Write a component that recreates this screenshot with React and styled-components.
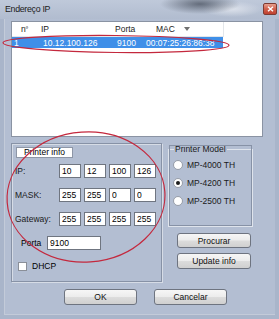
import styled, { createGlobalStyle } from "styled-components";

const GlobalStyle = createGlobalStyle`
  html, body {
    margin: 0;
    padding: 0;
    background: #a9b5ca;
  }
  * {
    box-sizing: border-box;
  }
`;

const columns = [
  { key: "num", width: 25 },
  { key: "ip", width: 74 },
  { key: "port", width: 33 },
  { key: "mac", width: 79 },
];

const printers = [
  { ip: "1", addr: "10.12.100.126", port: "9100", mac: "00:07:25:26:86:38" },
];

const ipRows = [
  { label: "IP:", values: ["10", "12", "100", "126"] },
  { label: "MASK:", values: ["255", "255", "0", "0"] },
  { label: "Gateway:", values: ["255", "255", "255", "255"] },
];

const models = ["MP-4000 TH", "MP-4200 TH", "MP-2500 TH"];

export default function App() {
  return (
    <>
      <GlobalStyle />
      <Window>
        <TitleBar>
          <Title>Endereço IP</Title>
          <CloseButton>
            <svg width="7" height="6" viewBox="0 0 7 6">
              <path d="M1 0.8 L6 5.2 M6 0.8 L1 5.2" stroke="#fff" strokeWidth="1.4" />
            </svg>
          </CloseButton>
        </TitleBar>

        <Client>
          <ListBox>
            <HeaderRow>
              <Cell $pad={9}>
                n<sup>º</sup>
              </Cell>
              <Cell $pad={4}>IP</Cell>
              <Cell $pad={4}>Porta</Cell>
              <Cell $pad={12}>
                MAC
                <SortArrow />
              </Cell>
            </HeaderRow>
            {printers.map((p) => (
              <DataRow key={p.ip} $selected>
                <Cell $pad={2}>{p.ip}</Cell>
                <Cell $pad={6}>{p.addr}</Cell>
                <Cell $pad={6}>{p.port}</Cell>
                <Cell $pad={2}>{p.mac}</Cell>
              </DataRow>
            ))}
          </ListBox>

          <Middle>
            <InfoGroup>
              <Tab>Printer info</Tab>
              <Fields>
                {ipRows.map((row) => (
                  <FieldRow key={row.label}>
                    <FieldLabel>{row.label}</FieldLabel>
                    {row.values.map((v, i) => (
                      <OctetInput key={i} readOnly value={v} />
                    ))}
                  </FieldRow>
                ))}
              </Fields>
              <PortRow>
                <PortLabel>Porta</PortLabel>
                <PortInput readOnly value="9100" />
              </PortRow>
              <CheckRow>
                <CheckBox />
                <span>DHCP</span>
              </CheckRow>
            </InfoGroup>

            <RightColumn>
              <ModelGroup>
                <ModelLegend>Printer Model</ModelLegend>
                {models.map((m) => (
                  <RadioRow key={m}>
                    <Radio $checked={m === "MP-4200 TH"} />
                    <span>{m}</span>
                  </RadioRow>
                ))}
              </ModelGroup>
              <SideButtons>
                <Button $w={74} $h={15}>Procurar</Button>
                <Button $w={74} $h={16}>Update info</Button>
              </SideButtons>
            </RightColumn>
          </Middle>

          <Footer>
            <Button $w={73} $h={16}>OK</Button>
            <Button $w={73} $h={16}>Cancelar</Button>
          </Footer>
        </Client>

        <Marks width="279" height="319" viewBox="0 0 279 319">
          <ellipse cx="116" cy="44" rx="113" ry="8.5" transform="rotate(0.6 116 44)" />
          <ellipse cx="86" cy="197" rx="79" ry="65" transform="rotate(-4 86 197)" />
        </Marks>
      </Window>
    </>
  );
}

const Window = styled.div`
  position: relative;
  width: 279px;
  height: 319px;
  display: flex;
  flex-direction: column;
  background: #a9b5ca;
  font-family: "Liberation Sans", Arial, sans-serif;
  font-size: 8.5px;
  color: #000;
  overflow: hidden;
`;

const TitleBar = styled.div`
  height: 19px;
  flex: none;
  display: flex;
  align-items: center;
  justify-content: space-between;
  padding: 0 2px 0 5px;
  background:
    radial-gradient(ellipse 40px 10px at 200px 4px, rgba(70, 78, 92, 0.75), rgba(70, 78, 92, 0) 100%),
    radial-gradient(ellipse 30px 8px at 232px 9px, rgba(235, 238, 244, 0.7), rgba(235, 238, 244, 0) 100%),
    linear-gradient(180deg, #bfc9da 0%, #b1bccf 100%);
`;

const Title = styled.span`
  font-size: 8.8px;
  letter-spacing: -0.3px;
  color: #1b1b1b;
  margin-top: -1px;
`;

const CloseButton = styled.div`
  width: 14px;
  height: 12px;
  margin-top: -2px;
  display: flex;
  align-items: center;
  justify-content: center;
  border: 1px solid #7d3b32;
  border-radius: 2px;
  background: linear-gradient(180deg, #e7a08f 0%, #d0604c 50%, #c0402f 100%);
`;

const Client = styled.div`
  flex: 1;
  margin: 0 4px 4px 4px;
  padding: 2px 12px 0 6px;
  display: flex;
  flex-direction: column;
  background: #b3bed2;
  border-left: 1px solid #c3cbd9;
  border-bottom: 1px solid #c3cbd9;
`;

const ListBox = styled.div`
  height: 116px;
  flex: none;
  background: #fff;
  border: 1px solid #8a93a3;
`;

const gridCols = columns.map((c) => `${c.width}px`).join(" ");

const HeaderRow = styled.div`
  display: grid;
  grid-template-columns: ${gridCols};
  height: 15px;
  align-items: end;
  padding-bottom: 2px;
  color: #1a1a1a;
  border-bottom: 1px solid #e3e6ea;
  width: 212px;
  border-right: 1px solid #e3e6ea;

  sup {
    font-size: 6px;
    vertical-align: 3px;
  }
`;

const DataRow = styled.div`
  display: grid;
  grid-template-columns: ${gridCols};
  height: 11px;
  width: 211px;
  align-items: center;
  background: ${(p) => (p.$selected ? "#3f8fe8" : "transparent")};
  color: ${(p) => (p.$selected ? "#fff" : "#000")};
`;

const Cell = styled.div`
  display: flex;
  align-items: center;
  padding-left: ${(p) => p.$pad}px;
  white-space: nowrap;
  line-height: 10px;
`;

const SortArrow = styled.span`
  margin-left: 9px;
  width: 0;
  height: 0;
  border-left: 3px solid transparent;
  border-right: 3px solid transparent;
  border-top: 4px solid #707070;
`;

const Middle = styled.div`
  display: flex;
  gap: 6px;
  margin-top: 6px;
`;

const InfoGroup = styled.div`
  width: 151px;
  height: 139px;
  padding: 3px 3px 0 3px;
  border: 1px solid #8792a6;
  box-shadow: inset 1px 1px 0 #d6dce6, 1px 1px 0 #d6dce6;
  display: flex;
  flex-direction: column;
`;

const Tab = styled.div`
  width: 57px;
  height: 11px;
  margin-left: 1px;
  display: flex;
  align-items: center;
  justify-content: center;
  background: #fff;
  border: 1px solid #8d96a6;
  line-height: 9px;
`;

const Fields = styled.div`
  display: flex;
  flex-direction: column;
  gap: 10px;
  margin-top: 6px;
`;

const FieldRow = styled.div`
  display: flex;
  align-items: center;
  gap: 3px;
  height: 14px;
`;

const FieldLabel = styled.span`
  width: 41px;
  color: #1a1a1a;
`;

const inputBase = `
  height: 14px;
  padding: 0 2px;
  border: 1px solid #6f7580;
  background: #fff;
  font-family: "Liberation Sans", Arial, sans-serif;
  font-size: 8.5px;
  color: #000;
  outline: none;
`;

const OctetInput = styled.input`
  ${inputBase}
  width: 22px;
`;

const PortRow = styled.div`
  display: flex;
  align-items: center;
  margin-top: 10px;
  padding-left: 6px;
  height: 14px;
`;

const PortLabel = styled.span`
  width: 26px;
`;

const PortInput = styled.input`
  ${inputBase}
  width: 54px;
`;

const CheckRow = styled.div`
  display: flex;
  align-items: center;
  gap: 5px;
  margin-top: 11px;
  padding-left: 3px;
`;

const CheckBox = styled.span`
  width: 9px;
  height: 9px;
  background: #fff;
  border: 1px solid #8a8f98;
`;

const RightColumn = styled.div`
  width: 85px;
  display: flex;
  flex-direction: column;
`;

const ModelGroup = styled.fieldset`
  margin: 1px 0 0 0;
  padding: 6px 0 0 4px;
  height: 83px;
  border: 1px solid #dfe4ec;
  outline: 1px solid #8792a6;
  outline-offset: -2px;
  display: flex;
  flex-direction: column;
  gap: 8px;
`;

const ModelLegend = styled.legend`
  padding: 0 1px;
  margin-left: 1px;
  line-height: 10px;
  color: #1a1a1a;
`;

const RadioRow = styled.div`
  display: flex;
  align-items: center;
  gap: 4px;
  height: 10px;
  color: #1a1a1a;
`;

const Radio = styled.span`
  width: 10px;
  height: 10px;
  border-radius: 50%;
  border: 1px solid #9aa0aa;
  background: radial-gradient(circle, #fff 60%, #e8ebef 100%);
  display: flex;
  align-items: center;
  justify-content: center;

  &::after {
    content: "";
    width: 4px;
    height: 4px;
    border-radius: 50%;
    background: ${(p) => (p.$checked ? "#1c1c1c" : "transparent")};
  }
`;

const SideButtons = styled.div`
  display: flex;
  flex-direction: column;
  gap: 5px;
  margin: 6px 0 0 9px;
`;

const Button = styled.button`
  width: ${(p) => p.$w}px;
  height: ${(p) => p.$h}px;
  padding: 0;
  border: 1px solid #6e7480;
  border-radius: 3px;
  background: linear-gradient(180deg, #f6f6f6 0%, #ececec 48%, #dcdcdc 52%, #d0d0d0 100%);
  font-family: "Liberation Sans", Arial, sans-serif;
  font-size: 8.5px;
  color: #111;
  display: flex;
  align-items: center;
  justify-content: center;
`;

const Footer = styled.div`
  display: flex;
  gap: 17px;
  margin-top: 7px;
  padding-left: 53px;
`;

const Marks = styled.svg`
  position: absolute;
  left: 0;
  top: 0;
  pointer-events: none;

  ellipse {
    fill: none;
    stroke: #c4283d;
    stroke-width: 1.2;
  }
`;
